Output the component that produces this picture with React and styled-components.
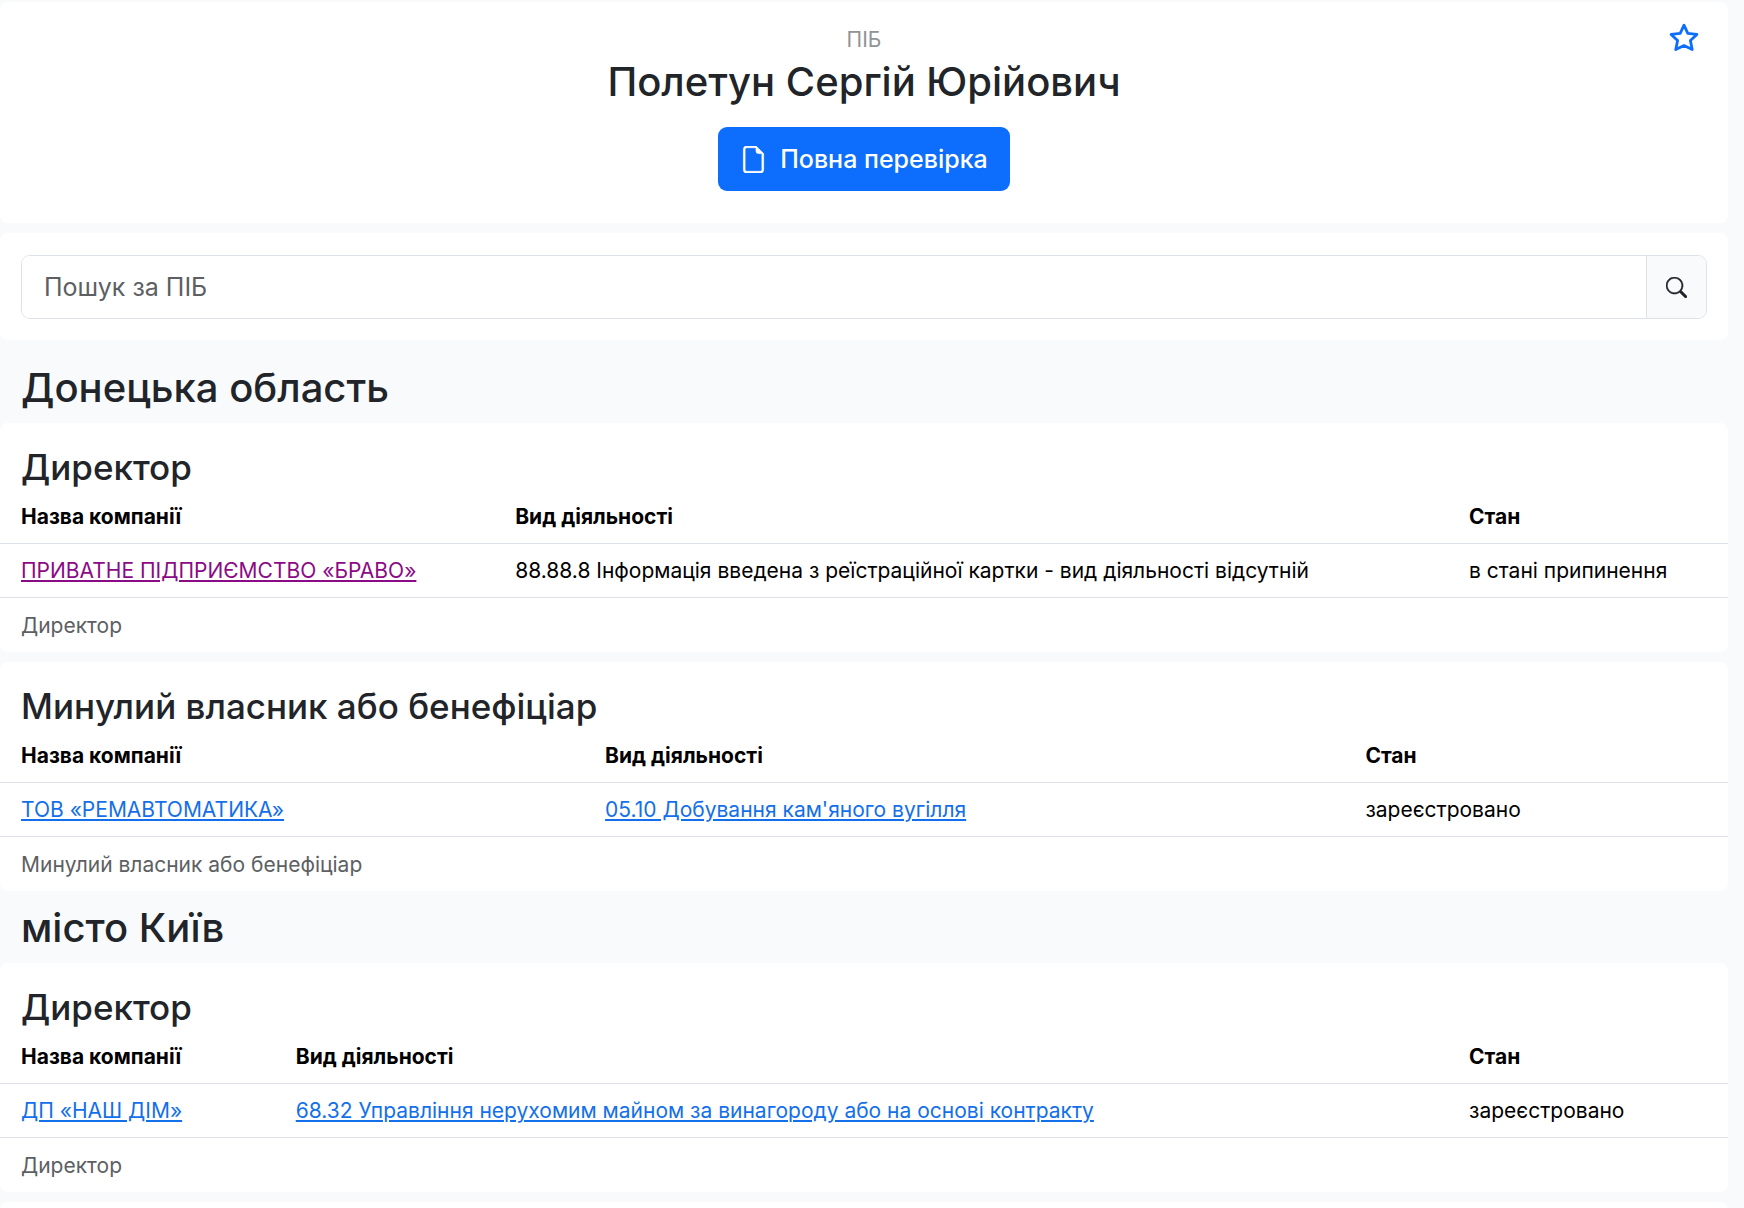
import React from "react";
import styled, { createGlobalStyle } from "styled-components";
import { BsFileEarmark, BsSearch } from "react-icons/bs";

const GlobalStyle = createGlobalStyle`
  *, *::before, *::after { box-sizing: border-box; }
  body {
    margin: 0;
    background: #f8fafc;
    color: #212529;
    font-family: Inter, "Noto Sans", sans-serif;
    font-size: 21px;
    line-height: 32px;
  }
`;

const Page = styled.main`
  padding: 2px 16px 0 0;
`;

const Card = styled.section`
  background: #fff;
  border-radius: 8px;
  margin-bottom: ${(p) => (p.$last ? 0 : 10)}px;
`;

const ProfileCard = styled(Card)`
  display: grid;
  grid-template-columns: 1fr auto 1fr;
  align-items: start;
  padding: 21px 21px 32px;
`;

const Profile = styled.div`
  grid-column: 2;
  display: flex;
  flex-direction: column;
  align-items: center;
`;

const Caption = styled.span`
  color: #919395;
  font-size: 21px;
  line-height: 34px;
`;

const Name = styled.h1`
  margin: 0 0 21px;
  font-size: 40px;
  font-weight: 500;
  line-height: 49px;
`;

const CheckButton = styled.button`
  display: flex;
  align-items: center;
  gap: 13px;
  height: 64px;
  padding: 0 22px;
  border: 0;
  border-radius: 9px;
  background: #0d6efd;
  color: #fff;
  font: 500 25px Inter, "Noto Sans", sans-serif;
  cursor: pointer;
  & svg { stroke: currentColor; stroke-width: 0.4; }
`;

const FavoriteButton = styled.button`
  justify-self: end;
  display: flex;
  padding: 0 8px;
  border: 0;
  background: none;
  color: #0d6efd;
  cursor: pointer;
`;

const SearchCard = styled(Card)`
  padding: 22px 21px 21px;
  margin-bottom: 11px;
`;

const SearchForm = styled.form`
  display: flex;
  height: 64px;
  border: 1px solid #dee2e6;
  border-radius: 9px;
  overflow: hidden;
`;

const SearchInput = styled.input`
  flex: 1;
  min-width: 0;
  padding: 0 22px;
  border: 0;
  outline: 0;
  background: #fff;
  color: #212529;
  font: 25px Inter, "Noto Sans", sans-serif;
  &::placeholder { color: #5d6063; opacity: 1; }
`;

const SearchButton = styled.button`
  display: flex;
  align-items: center;
  justify-content: center;
  width: 60px;
  padding: 0;
  border: 0;
  border-left: 1px solid #dee2e6;
  background: #f8fafc;
  color: #212529;
  cursor: pointer;
  & svg { stroke: currentColor; stroke-width: 0.4; }
`;

const RegionTitle = styled.h2`
  margin: 0;
  padding: 13px 21px 11px;
  font-size: 40px;
  font-weight: 500;
  line-height: 48px;
`;

const RoleTitle = styled.h3`
  margin: 0;
  padding: 23px 21px 2px;
  font-size: 35px;
  font-weight: 500;
  line-height: 42px;
`;

const Table = styled.table`
  width: 100%;
  table-layout: fixed;
  border-collapse: separate;
  border-spacing: 0;
  color: #000;
`;

const Col = styled.col`
  width: ${(p) => p.$width};
`;

const Cell = styled.td`
  height: 54px;
  padding: 1px 21px 0;
  border-bottom: ${(p) => (p.$plain ? "0" : "1px solid #dee2e6")};
  color: ${(p) => (p.$plain ? "#5d6063" : "inherit")};
  text-align: left;
  white-space: nowrap;
`;

const Link = styled.a`
  color: ${(p) => (p.$visited ? "#8b0a86" : "#146fea")};
  text-decoration: underline;
  text-decoration-thickness: 2px;
  text-underline-offset: 2px;
`;

function StarIcon() {
  return (
    <svg width="30" height="30" viewBox="0 0 30 30" fill="none" stroke="currentColor" strokeWidth="2.8" strokeLinejoin="round" aria-hidden="true">
      <path d="M15 2.2 18.8 10.4 27.9 11.4 21.4 17.6 23.2 26.6 15 22.6 6.8 26.6 8.6 17.6 2.1 11.4 11.2 10.4Z" />
    </svg>
  );
}

const regions = [
  {
    name: "Донецька область",
    groups: [
      {
        role: "Директор",
        widths: ["28.6%", "55.2%", "16.2%"],
        company: "ПРИВАТНЕ ПІДПРИЄМСТВО «БРАВО»",
        visited: true,
        activity: "88.88.8 Інформація введена з реїстраційної картки - вид діяльності відсутній",
        status: "в стані припинення",
      },
      {
        role: "Минулий власник або бенефіціар",
        widths: ["33.8%", "44%", "22.2%"],
        company: "ТОВ «РЕМАВТОМАТИКА»",
        activity: "05.10 Добування кам'яного вугілля",
        activityLink: true,
        status: "зареєстровано",
      },
    ],
  },
  {
    name: "місто Київ",
    groups: [
      {
        role: "Директор",
        widths: ["15.9%", "67.9%", "16.2%"],
        company: "ДП «НАШ ДІМ»",
        activity: "68.32 Управління нерухомим майном за винагороду або на основі контракту",
        activityLink: true,
        status: "зареєстровано",
      },
    ],
  },
];

function RoleCard({ group, last }) {
  return (
    <Card $last={last}>
      <RoleTitle>{group.role}</RoleTitle>
      <Table>
        <colgroup>
          {group.widths.map((w, i) => (
            <Col key={i} $width={w} />
          ))}
        </colgroup>
        <thead>
          <tr>
            <Cell as="th" scope="col">Назва компанії</Cell>
            <Cell as="th" scope="col">Вид діяльності</Cell>
            <Cell as="th" scope="col">Стан</Cell>
          </tr>
        </thead>
        <tbody>
          <tr>
            <Cell>
              <Link href="#company" $visited={group.visited}>{group.company}</Link>
            </Cell>
            <Cell>
              {group.activityLink ? <Link href="#activity">{group.activity}</Link> : group.activity}
            </Cell>
            <Cell>{group.status}</Cell>
          </tr>
          <tr>
            <Cell $plain colSpan={3}>{group.role}</Cell>
          </tr>
        </tbody>
      </Table>
    </Card>
  );
}

const NextCard = styled(Card)`
  height: 24px;
`;

const Clip = styled.div`
  height: 100vh;
  overflow: hidden;
`;

export default function App() {
  return (
    <Clip>
      <GlobalStyle />
      <Page>
        <ProfileCard>
          <Profile>
            <Caption>ПІБ</Caption>
            <Name>Полетун Сергій Юрійович</Name>
            <CheckButton type="button">
              <BsFileEarmark size={27} aria-hidden="true" />
              Повна перевірка
            </CheckButton>
          </Profile>
          <FavoriteButton type="button" aria-label="Додати до обраного">
            <StarIcon />
          </FavoriteButton>
        </ProfileCard>
        <SearchCard>
          <SearchForm onSubmit={(e) => e.preventDefault()}>
            <SearchInput type="text" placeholder="Пошук за ПІБ" aria-label="Пошук за ПІБ" />
            <SearchButton type="submit" aria-label="Шукати">
              <BsSearch size={21} aria-hidden="true" />
            </SearchButton>
          </SearchForm>
        </SearchCard>
        {regions.map((region, r) => (
          <section key={region.name}>
            <RegionTitle>{region.name}</RegionTitle>
            {region.groups.map((group, i) => (
              <RoleCard
                key={group.role}
                group={group}
                last={r < regions.length - 1 && i === region.groups.length - 1}
              />
            ))}
          </section>
        ))}
        <NextCard />
      </Page>
    </Clip>
  );
}
